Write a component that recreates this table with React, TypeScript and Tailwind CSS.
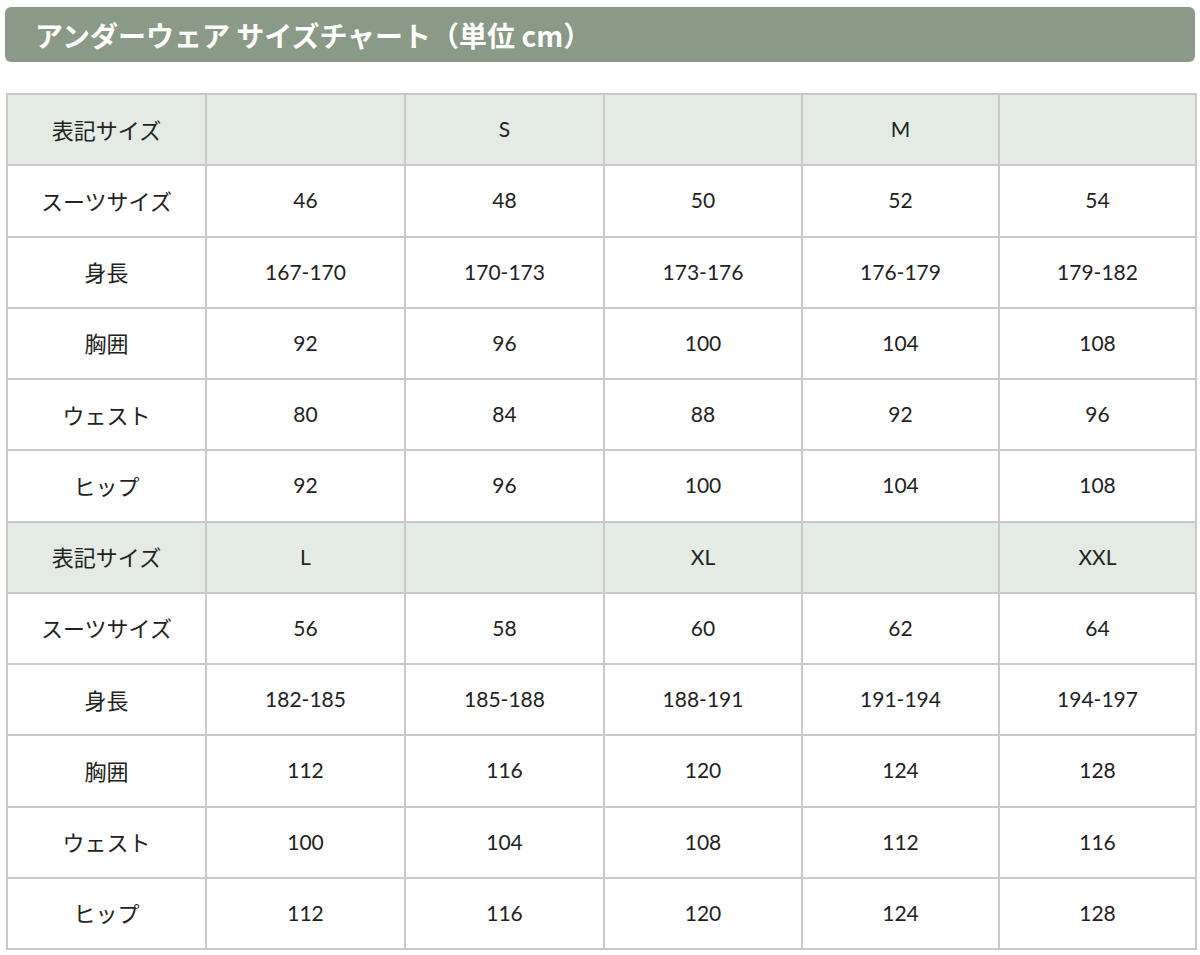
import React from "react";

const rows1: { label: string; cells: string[]; head?: boolean }[] = [
  { label: "表記サイズ", cells: ["", "S", "", "M", ""], head: true },
  { label: "スーツサイズ", cells: ["46", "48", "50", "52", "54"] },
  { label: "身長", cells: ["167-170", "170-173", "173-176", "176-179", "179-182"] },
  { label: "胸囲", cells: ["92", "96", "100", "104", "108"] },
  { label: "ウェスト", cells: ["80", "84", "88", "92", "96"] },
  { label: "ヒップ", cells: ["92", "96", "100", "104", "108"] },
  { label: "表記サイズ", cells: ["L", "", "XL", "", "XXL"], head: true },
  { label: "スーツサイズ", cells: ["56", "58", "60", "62", "64"] },
  { label: "身長", cells: ["182-185", "185-188", "188-191", "191-194", "194-197"] },
  { label: "胸囲", cells: ["112", "116", "120", "124", "128"] },
  { label: "ウェスト", cells: ["100", "104", "108", "112", "116"] },
  { label: "ヒップ", cells: ["112", "116", "120", "124", "128"] },
];

export default function App() {
  return (
    <div className="w-[1200px] h-[955px] bg-white pt-[7px] px-[5px] text-[#222]" style={{ fontFamily: "Lato, 'Noto Sans CJK JP', sans-serif" }}>
      <div className="h-[55px] rounded-[6px] bg-[#8b9a87] flex items-center pl-[30px] pr-[24px]">
        <h1 className="text-white font-bold text-[28px] leading-none" style={{ fontFamily: "'Noto Sans CJK JP', sans-serif" }}>
          アンダーウェア サイズチャート（単位 cm）
        </h1>
      </div>
      <table className="mt-[31px] ml-[1px] w-[1189px] border-collapse table-fixed">
        <colgroup>
          <col className="w-[199px]" />
          <col className="w-[199px]" />
          <col className="w-[199px]" />
          <col className="w-[198px]" />
          <col className="w-[197px]" />
          <col className="w-[197px]" />
        </colgroup>
        <tbody>
          {rows1.map((r, i) => (
            <tr key={i} className={r.head ? "bg-[#e4ebe5]" : "bg-white"}>
              <td className="h-[71.25px] border-2 border-[#c9c9c9] text-center align-middle text-[22px] leading-none p-0 pb-[2px]" style={{ fontFamily: "'Noto Sans CJK JP', sans-serif" }}>
                {r.label}
              </td>
              {r.cells.map((c, j) => (
                <td key={j} className="h-[71.25px] border-2 border-[#c9c9c9] text-center align-middle text-[21px] leading-none p-0 pb-[2px]">
                  {c}
                </td>
              ))}
            </tr>
          ))}
        </tbody>
      </table>
    </div>
  );
}
